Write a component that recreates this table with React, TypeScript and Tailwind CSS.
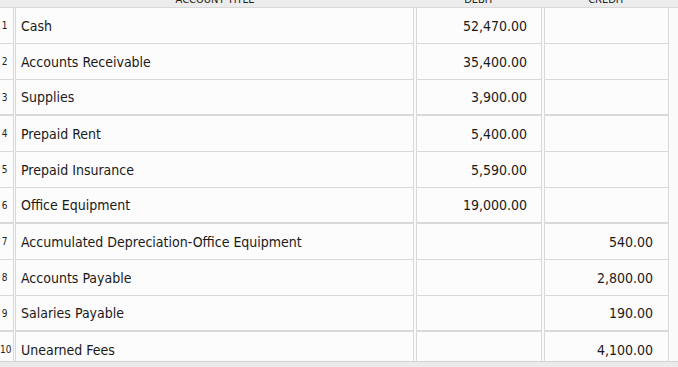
const rows: { n: number; title: string; debit?: string; credit?: string }[] = [
  { n: 1, title: 'Cash', debit: '52,470.00' },
  { n: 2, title: 'Accounts Receivable', debit: '35,400.00' },
  { n: 3, title: 'Supplies', debit: '3,900.00' },
  { n: 4, title: 'Prepaid Rent', debit: '5,400.00' },
  { n: 5, title: 'Prepaid Insurance', debit: '5,590.00' },
  { n: 6, title: 'Office Equipment', debit: '19,000.00' },
  { n: 7, title: 'Accumulated Depreciation-Office Equipment', credit: '540.00' },
  { n: 8, title: 'Accounts Payable', credit: '2,800.00' },
  { n: 9, title: 'Salaries Payable', credit: '190.00' },
  { n: 10, title: 'Unearned Fees', credit: '4,100.00' },
];

const font = { fontFamily: "'DejaVu Sans Condensed', 'Liberation Sans', sans-serif" };

export default function App() {
  return (
    <div className="flex h-[367px] w-[678px] flex-col overflow-hidden bg-[#fafafa] text-[#1a1a1a]" style={font}>
      <div className="min-h-0 flex-1 overflow-hidden">
        <div className="mt-[-21px] flex flex-col">
          {/* header, mostly scrolled out of view */}
          <div className="flex h-[29px] border-b border-[#d9d9d9] bg-[#ececec] text-[11px] leading-none uppercase text-[#222]">
            <div className="w-[16px] shrink-0" />
            <div className="flex w-[398px] shrink-0 items-end justify-center pb-[2px]">Account Title</div>
            <div className="w-[2px] shrink-0" />
            <div className="flex w-[126px] shrink-0 items-end justify-center pb-[2px]">Debit</div>
            <div className="w-[2px] shrink-0" />
            <div className="flex w-[125px] shrink-0 items-end justify-center pb-[2px]">Credit</div>
          </div>
          {rows.map((r) => {
            const line = r.n % 3 === 0 ? 'border-b-2' : 'border-b';
            return (
              <div key={r.n} className="flex h-[36px]">
                <div className={`flex w-[14px] shrink-0 items-center border-r border-[#d9d9d9] bg-[#fcfcfc] pr-[4px] ${line}`}>
                  <span className="w-full text-center text-[10px] text-[#222]">{r.n}</span>
                </div>
                <div className="w-[1px] shrink-0" />
                <div className={`flex w-[399px] shrink-0 items-center border-x border-[#d9d9d9] bg-[#fcfcfc] pl-[5px] pt-[1px] text-[14px] ${line}`}>
                  {r.title}
                </div>
                <div className="w-[2px] shrink-0" />
                <div className={`flex w-[126px] shrink-0 items-center justify-end border-x border-[#d9d9d9] bg-[#fcfcfc] pr-[14px] pt-[1px] text-[14px] ${line}`}>
                  {r.debit}
                </div>
                <div className="w-[2px] shrink-0" />
                <div className={`flex w-[125px] shrink-0 items-center justify-end border-x border-[#d9d9d9] bg-[#fcfcfc] pr-[15px] pt-[1px] text-[14px] ${line}`}>
                  {r.credit}
                </div>
              </div>
            );
          })}
        </div>
      </div>
      <div className="h-[6px] shrink-0 border-t border-[#d4d4d4] bg-[#ebebeb]" />
    </div>
  );
}
